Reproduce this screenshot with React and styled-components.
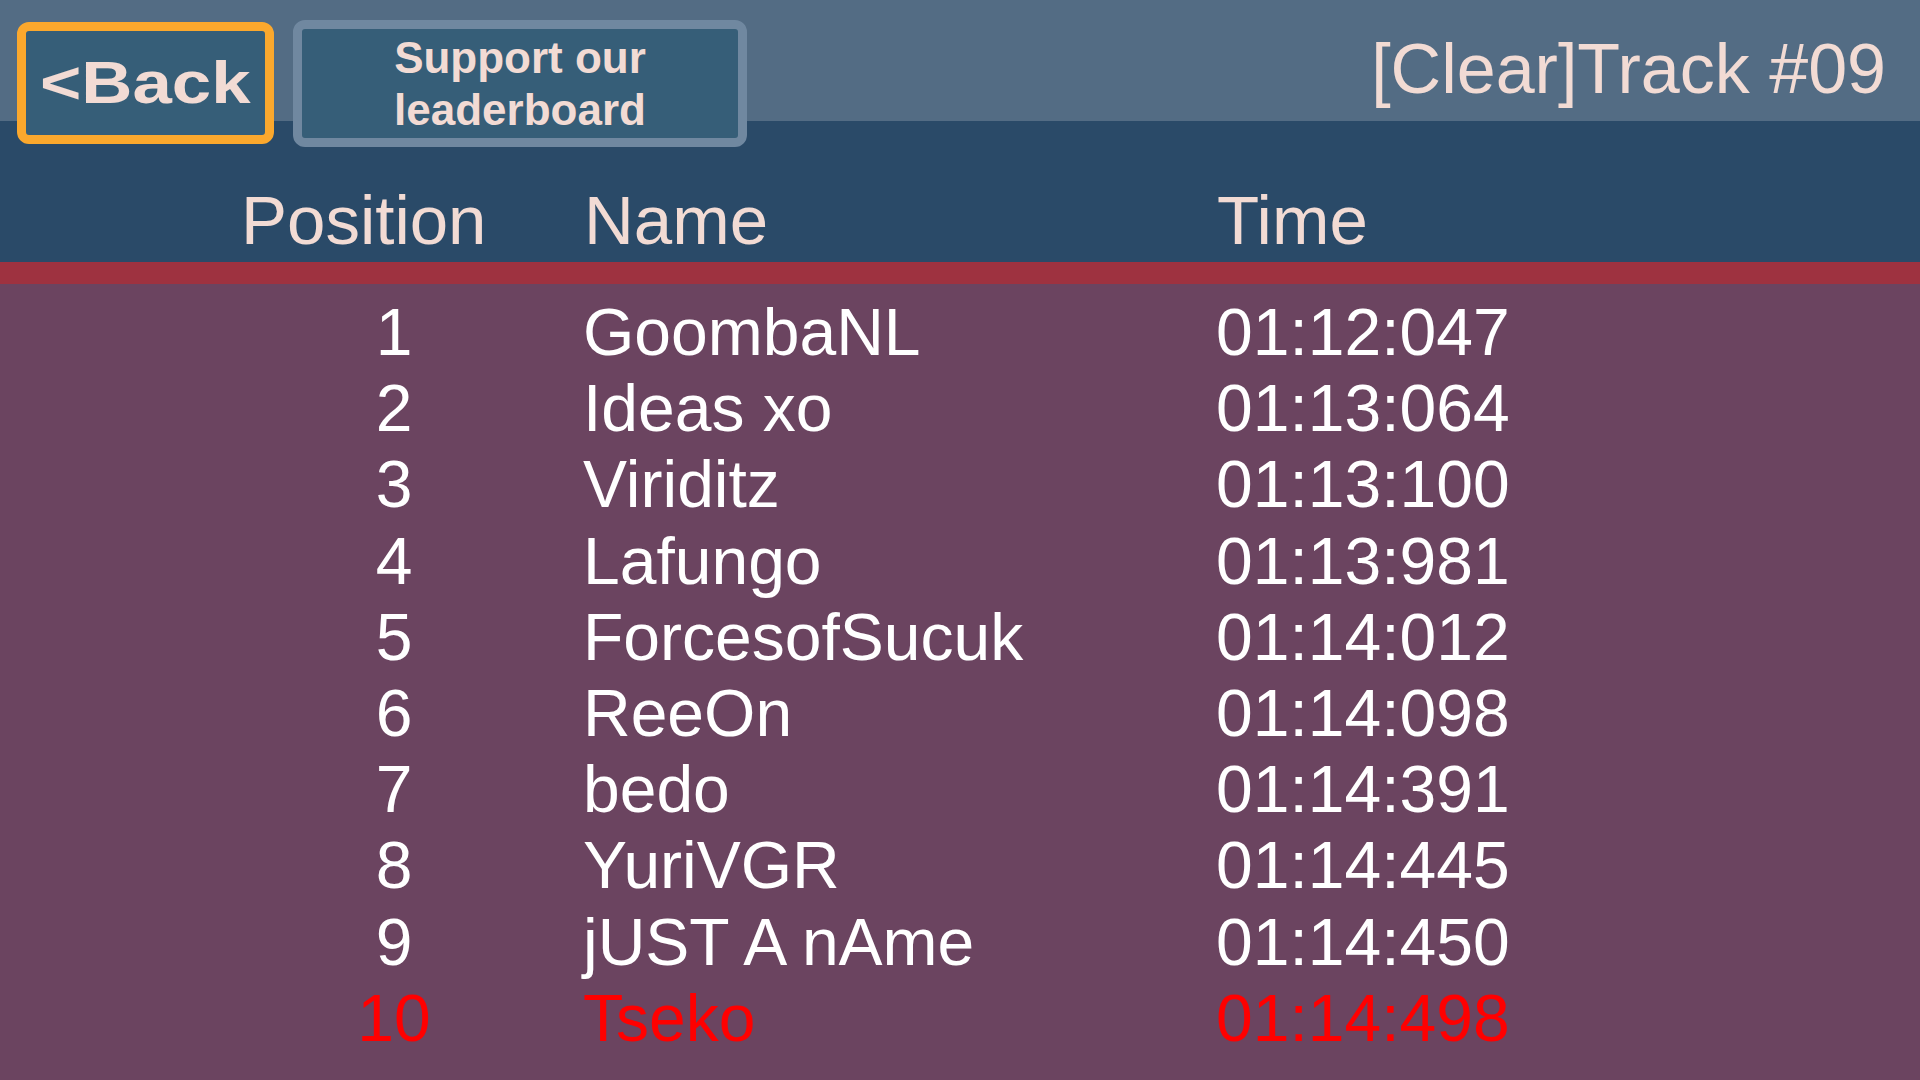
import styled, { createGlobalStyle } from "styled-components";

const GlobalStyle = createGlobalStyle`
  html, body {
    margin: 0;
    padding: 0;
    background: #6b4460;
  }
  body {
    font-family: "Liberation Sans", Arial, sans-serif;
  }
`;

const scores = [
  { pos: 1, name: "GoombaNL", time: "01:12:047" },
  { pos: 2, name: "Ideas xo", time: "01:13:064" },
  { pos: 3, name: "Viriditz", time: "01:13:100" },
  { pos: 4, name: "Lafungo", time: "01:13:981" },
  { pos: 5, name: "ForcesofSucuk", time: "01:14:012" },
  { pos: 6, name: "ReeOn", time: "01:14:098" },
  { pos: 7, name: "bedo", time: "01:14:391" },
  { pos: 8, name: "YuriVGR", time: "01:14:445" },
  { pos: 9, name: "jUST A nAme", time: "01:14:450" },
  { pos: 10, name: "Tseko", time: "01:14:498", me: true },
];

const App = () => {
  return (
    <>
      <GlobalStyle />
      <Screen>
        <Header>
          <Toolbar>
            <BackButton>
              <BackLabel>&lt;Back</BackLabel>
            </BackButton>
            <SupportButton>
              Support our
              <br />
              leaderboard
            </SupportButton>
            <TrackTitle>[Clear]Track #09</TrackTitle>
          </Toolbar>
          <ColumnsHead>
            <HeadCell>Position</HeadCell>
            <HeadCell>Name</HeadCell>
            <HeadCell>Time</HeadCell>
          </ColumnsHead>
        </Header>
        <Stripe />
        <Rows>
          {scores.map((s) => (
            <Row key={s.pos} $me={s.me}>
              <PosCell>{s.pos}</PosCell>
              <div>{s.name}</div>
              <div>{s.time}</div>
            </Row>
          ))}
        </Rows>
      </Screen>
    </>
  );
};

const Screen = styled.div`
  width: 1920px;
  height: 1080px;
  overflow: hidden;
  background: #6b4460;
  display: flex;
  flex-direction: column;
`;

const Header = styled.div`
  height: 262px;
  background: linear-gradient(to bottom, #536c84 0, #536c84 121px, #2a4a68 121px);
`;

const Toolbar = styled.div`
  display: flex;
  align-items: flex-start;
  height: 147px;
  box-sizing: border-box;
  padding: 20px 34px 0 17px;
`;

const BackButton = styled.div`
  margin-top: 2px;
  width: 257px;
  height: 122px;
  box-sizing: border-box;
  border: 9px solid #fba82d;
  border-radius: 12px;
  background: #365e78;
  display: flex;
  align-items: center;
  justify-content: center;
`;

const BackLabel = styled.span`
  display: inline-block;
  font-size: 60px;
  font-weight: bold;
  line-height: 1;
  color: #f2dbd4;
  transform: scaleX(1.18);
`;

const SupportButton = styled.div`
  margin-left: 19px;
  width: 454px;
  height: 127px;
  box-sizing: border-box;
  border: 9px solid #7088a0;
  border-radius: 12px;
  background: #365e78;
  display: flex;
  align-items: center;
  justify-content: center;
  text-align: center;
  font-size: 44px;
  font-weight: bold;
  line-height: 52px;
  color: #f2dbd4;
`;

const TrackTitle = styled.div`
  margin-left: auto;
  margin-top: 9px;
  font-size: 70px;
  line-height: 80px;
  color: #f2dbd4;
  white-space: nowrap;
`;

const ColumnsHead = styled.div`
  display: grid;
  grid-template-columns: 308px 598px 1fr;
  column-gap: 35px;
  padding: 34px 0 0 241px;
`;

const HeadCell = styled.div`
  font-size: 69px;
  line-height: 80px;
  color: #f2dbd4;
`;

const Stripe = styled.div`
  height: 22px;
  background: #9e3240;
`;

const Rows = styled.div`
  padding-top: 10px;
`;

const Row = styled.div`
  display: grid;
  grid-template-columns: 308px 598px 1fr;
  column-gap: 35px;
  padding-left: 240px;
  height: 76.2px;
  font-size: 66px;
  line-height: 76px;
  color: ${(p) => (p.$me ? "#ff0000" : "#ffffff")};
  white-space: nowrap;
`;

const PosCell = styled.div`
  text-align: center;
`;

export default App;
